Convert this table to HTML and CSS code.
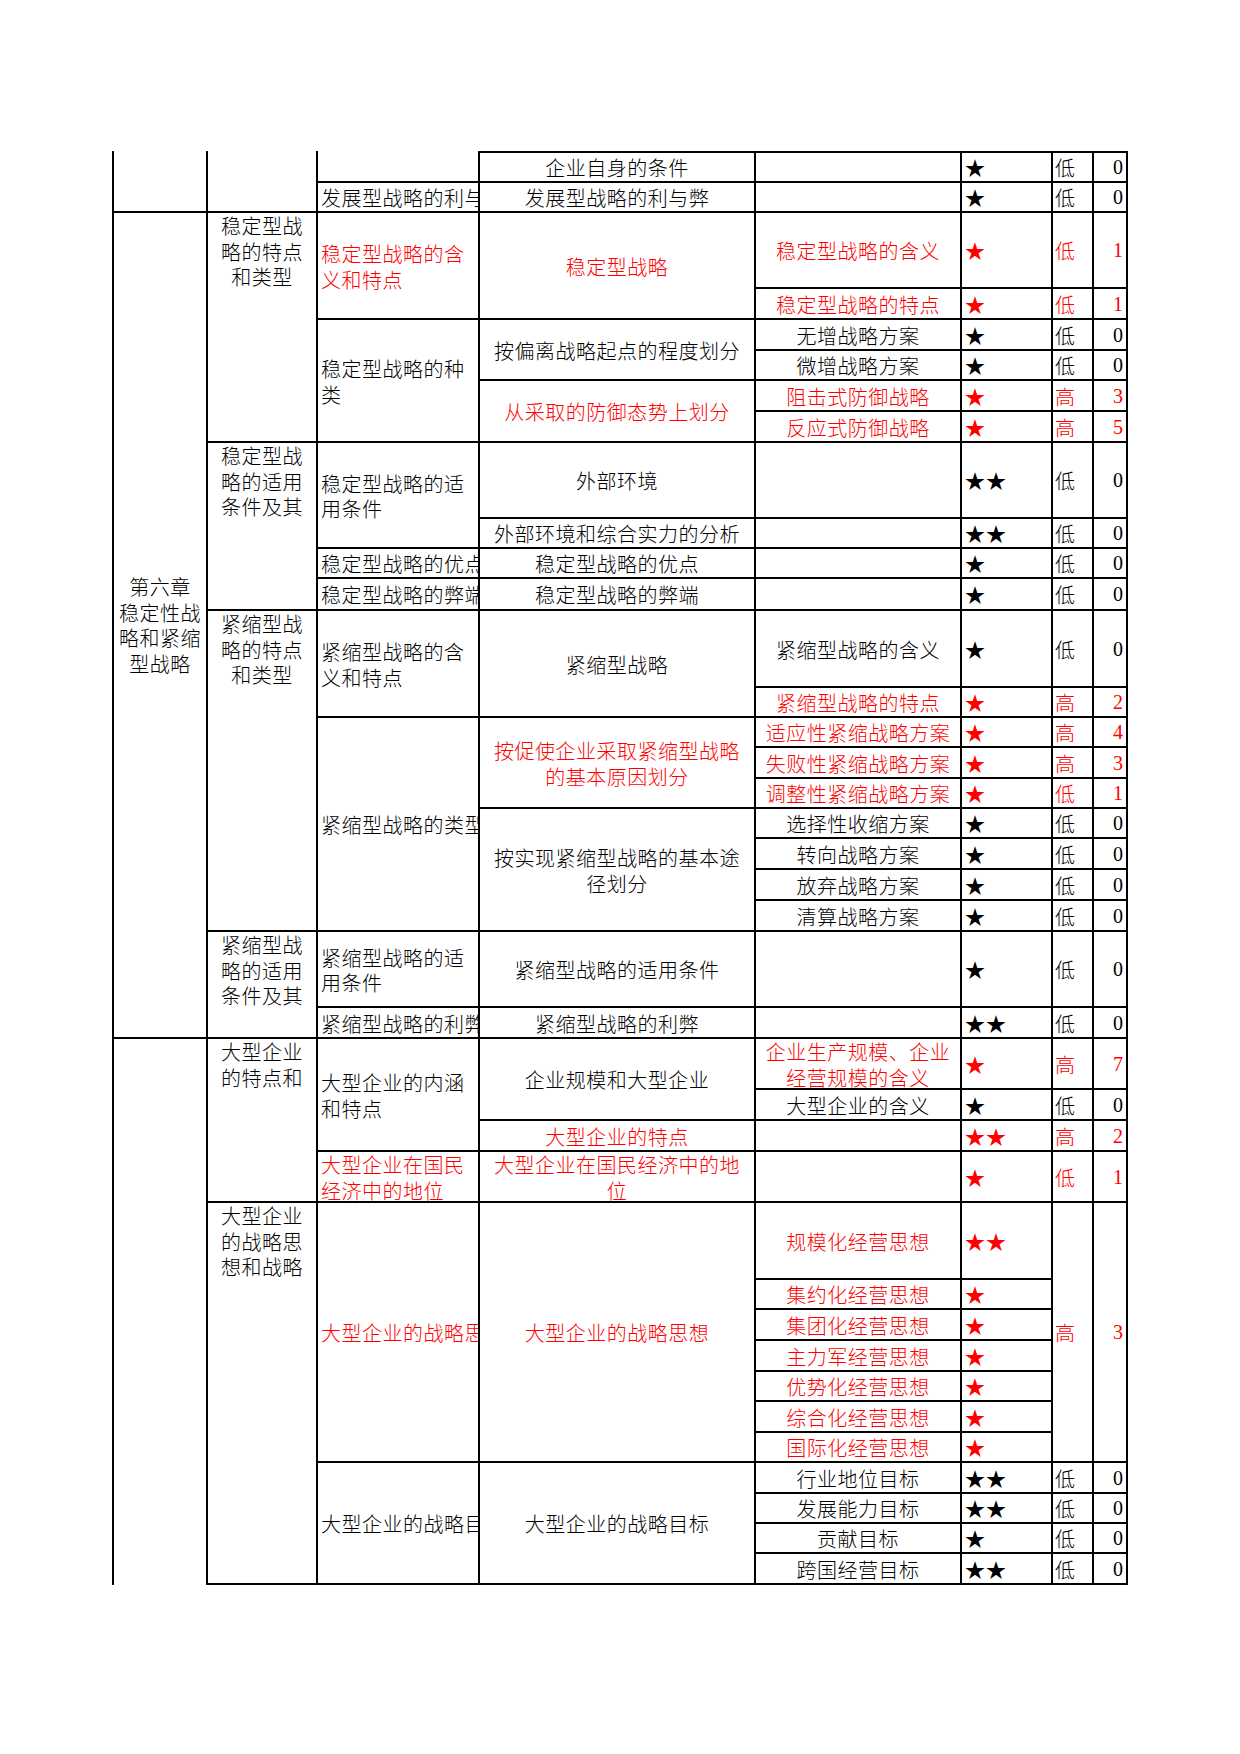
FILE: index.html
```html
<!DOCTYPE html>
<html lang="zh-CN">
<head>
<meta charset="utf-8">
<title>第六章 稳定性战略和紧缩型战略</title>
<link rel="stylesheet" href="styles.css">
</head>
<body>
<div class="page">
  <div class="sheet">
    <!-- r0 -->
    <div class="cell c1 s2 nt"></div>
    <div class="cell c2 s2 nt"></div>
    <div class="cell c3 nt"></div>
    <div class="cell c4">企业自身的条件</div>
    <div class="cell c5"></div>
    <div class="cell c6">★</div>
    <div class="cell c7">低</div>
    <div class="cell c8">0</div>
    <!-- r1 -->
    <div class="cell c3 clip">发展型战略的利与弊</div>
    <div class="cell c4">发展型战略的利与弊</div>
    <div class="cell c5"></div>
    <div class="cell c6">★</div>
    <div class="cell c7">低</div>
    <div class="cell c8">0</div>
    <!-- r2 -->
    <div class="cell c1 s21">第六章<br>稳定性战略和紧缩型战略</div>
    <div class="cell c2 s6">稳定型战略的特点和类型</div>
    <div class="cell c3 s2 red">稳定型战略的含义和特点</div>
    <div class="cell c4 s2 red">稳定型战略</div>
    <div class="cell c5 red">稳定型战略的含义</div>
    <div class="cell c6 red">★</div>
    <div class="cell c7 red">低</div>
    <div class="cell c8 red">1</div>
    <!-- r3 -->
    <div class="cell c5 red">稳定型战略的特点</div>
    <div class="cell c6 red">★</div>
    <div class="cell c7 red">低</div>
    <div class="cell c8 red">1</div>
    <!-- r4 -->
    <div class="cell c3 s4">稳定型战略的种类</div>
    <div class="cell c4 s2">按偏离战略起点的程度划分</div>
    <div class="cell c5">无增战略方案</div>
    <div class="cell c6">★</div>
    <div class="cell c7">低</div>
    <div class="cell c8">0</div>
    <!-- r5 -->
    <div class="cell c5">微增战略方案</div>
    <div class="cell c6">★</div>
    <div class="cell c7">低</div>
    <div class="cell c8">0</div>
    <!-- r6 -->
    <div class="cell c4 s2 red">从采取的防御态势上划分</div>
    <div class="cell c5 red">阻击式防御战略</div>
    <div class="cell c6 red">★</div>
    <div class="cell c7 red">高</div>
    <div class="cell c8 red">3</div>
    <!-- r7 -->
    <div class="cell c5 red">反应式防御战略</div>
    <div class="cell c6 red">★</div>
    <div class="cell c7 red">高</div>
    <div class="cell c8 red">5</div>
    <!-- r8 -->
    <div class="cell c2 s4">稳定型战略的适用条件及其</div>
    <div class="cell c3 s2">稳定型战略的适用条件</div>
    <div class="cell c4">外部环境</div>
    <div class="cell c5"></div>
    <div class="cell c6">★★</div>
    <div class="cell c7">低</div>
    <div class="cell c8">0</div>
    <!-- r9 -->
    <div class="cell c4">外部环境和综合实力的分析</div>
    <div class="cell c5"></div>
    <div class="cell c6">★★</div>
    <div class="cell c7">低</div>
    <div class="cell c8">0</div>
    <!-- r10 -->
    <div class="cell c3 clip">稳定型战略的优点</div>
    <div class="cell c4">稳定型战略的优点</div>
    <div class="cell c5"></div>
    <div class="cell c6">★</div>
    <div class="cell c7">低</div>
    <div class="cell c8">0</div>
    <!-- r11 -->
    <div class="cell c3 clip">稳定型战略的弊端</div>
    <div class="cell c4">稳定型战略的弊端</div>
    <div class="cell c5"></div>
    <div class="cell c6">★</div>
    <div class="cell c7">低</div>
    <div class="cell c8">0</div>
    <!-- r12 -->
    <div class="cell c2 s9">紧缩型战略的特点和类型</div>
    <div class="cell c3 s2">紧缩型战略的含义和特点</div>
    <div class="cell c4 s2">紧缩型战略</div>
    <div class="cell c5">紧缩型战略的含义</div>
    <div class="cell c6">★</div>
    <div class="cell c7">低</div>
    <div class="cell c8">0</div>
    <!-- r13 -->
    <div class="cell c5 red">紧缩型战略的特点</div>
    <div class="cell c6 red">★</div>
    <div class="cell c7 red">高</div>
    <div class="cell c8 red">2</div>
    <!-- r14 -->
    <div class="cell c3 s7 clip">紧缩型战略的类型</div>
    <div class="cell c4 s3 red">按促使企业采取紧缩型战略的基本原因划分</div>
    <div class="cell c5 red">适应性紧缩战略方案</div>
    <div class="cell c6 red">★</div>
    <div class="cell c7 red">高</div>
    <div class="cell c8 red">4</div>
    <!-- r15 -->
    <div class="cell c5 red">失败性紧缩战略方案</div>
    <div class="cell c6 red">★</div>
    <div class="cell c7 red">高</div>
    <div class="cell c8 red">3</div>
    <!-- r16 -->
    <div class="cell c5 red">调整性紧缩战略方案</div>
    <div class="cell c6 red">★</div>
    <div class="cell c7 red">低</div>
    <div class="cell c8 red">1</div>
    <!-- r17 -->
    <div class="cell c4 s4">按实现紧缩型战略的基本途径划分</div>
    <div class="cell c5">选择性收缩方案</div>
    <div class="cell c6">★</div>
    <div class="cell c7">低</div>
    <div class="cell c8">0</div>
    <!-- r18 -->
    <div class="cell c5">转向战略方案</div>
    <div class="cell c6">★</div>
    <div class="cell c7">低</div>
    <div class="cell c8">0</div>
    <!-- r19 -->
    <div class="cell c5">放弃战略方案</div>
    <div class="cell c6">★</div>
    <div class="cell c7">低</div>
    <div class="cell c8">0</div>
    <!-- r20 -->
    <div class="cell c5">清算战略方案</div>
    <div class="cell c6">★</div>
    <div class="cell c7">低</div>
    <div class="cell c8">0</div>
    <!-- r21 -->
    <div class="cell c2 s2">紧缩型战略的适用条件及其</div>
    <div class="cell c3">紧缩型战略的适用条件</div>
    <div class="cell c4">紧缩型战略的适用条件</div>
    <div class="cell c5"></div>
    <div class="cell c6">★</div>
    <div class="cell c7">低</div>
    <div class="cell c8">0</div>
    <!-- r22 -->
    <div class="cell c3 clip">紧缩型战略的利弊</div>
    <div class="cell c4">紧缩型战略的利弊</div>
    <div class="cell c5"></div>
    <div class="cell c6">★★</div>
    <div class="cell c7">低</div>
    <div class="cell c8">0</div>
    <!-- r23 -->
    <div class="cell c1 s15"></div>
    <div class="cell c2 s4">大型企业的特点和</div>
    <div class="cell c3 s3">大型企业的内涵和特点</div>
    <div class="cell c4 s2">企业规模和大型企业</div>
    <div class="cell c5 red">企业生产规模、企业经营规模的含义</div>
    <div class="cell c6 red">★</div>
    <div class="cell c7 red">高</div>
    <div class="cell c8 red">7</div>
    <!-- r24 -->
    <div class="cell c5">大型企业的含义</div>
    <div class="cell c6">★</div>
    <div class="cell c7">低</div>
    <div class="cell c8">0</div>
    <!-- r25 -->
    <div class="cell c4 red">大型企业的特点</div>
    <div class="cell c5"></div>
    <div class="cell c6 red">★★</div>
    <div class="cell c7 red">高</div>
    <div class="cell c8 red">2</div>
    <!-- r26 -->
    <div class="cell c3 red">大型企业在国民经济中的地位</div>
    <div class="cell c4 red">大型企业在国民经济中的地位</div>
    <div class="cell c5"></div>
    <div class="cell c6 red">★</div>
    <div class="cell c7 red">低</div>
    <div class="cell c8 red">1</div>
    <!-- r27 -->
    <div class="cell c2 s11 bb">大型企业的战略思想和战略</div>
    <div class="cell c3 s7 clip red">大型企业的战略思想</div>
    <div class="cell c4 s7 red">大型企业的战略思想</div>
    <div class="cell c5 red">规模化经营思想</div>
    <div class="cell c6 red">★★</div>
    <div class="cell c7 s7 red">高</div>
    <div class="cell c8 s7 red">3</div>
    <!-- r28 -->
    <div class="cell c5 red">集约化经营思想</div>
    <div class="cell c6 red">★</div>
    <!-- r29 -->
    <div class="cell c5 red">集团化经营思想</div>
    <div class="cell c6 red">★</div>
    <!-- r30 -->
    <div class="cell c5 red">主力军经营思想</div>
    <div class="cell c6 red">★</div>
    <!-- r31 -->
    <div class="cell c5 red">优势化经营思想</div>
    <div class="cell c6 red">★</div>
    <!-- r32 -->
    <div class="cell c5 red">综合化经营思想</div>
    <div class="cell c6 red">★</div>
    <!-- r33 -->
    <div class="cell c5 red">国际化经营思想</div>
    <div class="cell c6 red">★</div>
    <!-- r34 -->
    <div class="cell c3 s4 clip bb">大型企业的战略目标</div>
    <div class="cell c4 s4 bb">大型企业的战略目标</div>
    <div class="cell c5">行业地位目标</div>
    <div class="cell c6">★★</div>
    <div class="cell c7">低</div>
    <div class="cell c8">0</div>
    <!-- r35 -->
    <div class="cell c5">发展能力目标</div>
    <div class="cell c6">★★</div>
    <div class="cell c7">低</div>
    <div class="cell c8">0</div>
    <!-- r36 -->
    <div class="cell c5">贡献目标</div>
    <div class="cell c6">★</div>
    <div class="cell c7">低</div>
    <div class="cell c8">0</div>
    <!-- r37 -->
    <div class="cell c5 bb">跨国经营目标</div>
    <div class="cell c6 bb">★★</div>
    <div class="cell c7 bb">低</div>
    <div class="cell c8 bb">0</div>
  </div>
</div>
</body>
</html>
```

FILE: styles.css
```css
* {
  box-sizing: border-box;
}

html,
body {
  margin: 0;
  padding: 0;
  background: #ffffff;
}

body {
  font-family: "Noto Sans CJK SC", "Liberation Serif", sans-serif;
  color: #000000;
}

.page {
  padding: 151px 0 0 112px;
}

.sheet {
  display: grid;
  width: 1016px;
  grid-template-columns: 94px 110px 162px 276px 206px 91px 41px 36px;
  grid-template-rows:
    30px 30px 76px 31px 31px 30px 31px 31px
    76px 30px 30px 32px 77px 30px 30px 31px
    30px 30px 31px 31px 31px 76px 31px 51px
    31px 31px 51px 77px 30px 31px 31px 30px
    31px 30px 31px 30px 30px 33px;
  font-size: 20px;
  line-height: 25.5px;
  letter-spacing: 0.5px;
  font-weight: 300;
}

.cell {
  display: flex;
  align-items: center;
  justify-content: center;
  text-align: center;
  min-width: 0;
  overflow: hidden;
  padding-top: 2px;
  border-left: 2px solid #000000;
  border-top: 2px solid #000000;
}

.nt {
  border-top: none;
}

.bb {
  border-bottom: 2px solid #000000;
}

.red {
  color: #ff0000;
}

/* column placement & styling */
.c1 {
  grid-column: 1;
  padding: 0 4px;
}

.c2 {
  grid-column: 2;
  align-items: flex-start;
  padding: 0 7px;
}

.c3 {
  grid-column: 3;
  justify-content: flex-start;
  text-align: left;
  padding-left: 3px;
  padding-right: 4px;
}

.c4 {
  grid-column: 4;
  padding-left: 6px;
  padding-right: 6px;
}

.c5 {
  grid-column: 5;
  padding-left: 4px;
  padding-right: 4px;
}

.c6 {
  grid-column: 6;
  justify-content: flex-start;
  text-align: left;
  padding-left: 3px;
  letter-spacing: 1px;
}

.c7 {
  grid-column: 7;
  justify-content: flex-start;
  text-align: left;
  padding-left: 2px;
}

.c8 {
  grid-column: 8;
  justify-content: flex-end;
  text-align: right;
  padding-right: 3px;
  font-family: "Liberation Serif", serif;
  font-size: 20px;
  letter-spacing: 0;
  border-right: 2px solid #000000;
}

.clip {
  white-space: nowrap;
}

/* row spans */
.s2 { grid-row: span 2; }
.s3 { grid-row: span 3; }
.s4 { grid-row: span 4; }
.s6 { grid-row: span 6; }
.s7 { grid-row: span 7; }
.s9 { grid-row: span 9; }
.s11 { grid-row: span 11; }
.s15 { grid-row: span 15; }
.s21 { grid-row: span 21; }
```
